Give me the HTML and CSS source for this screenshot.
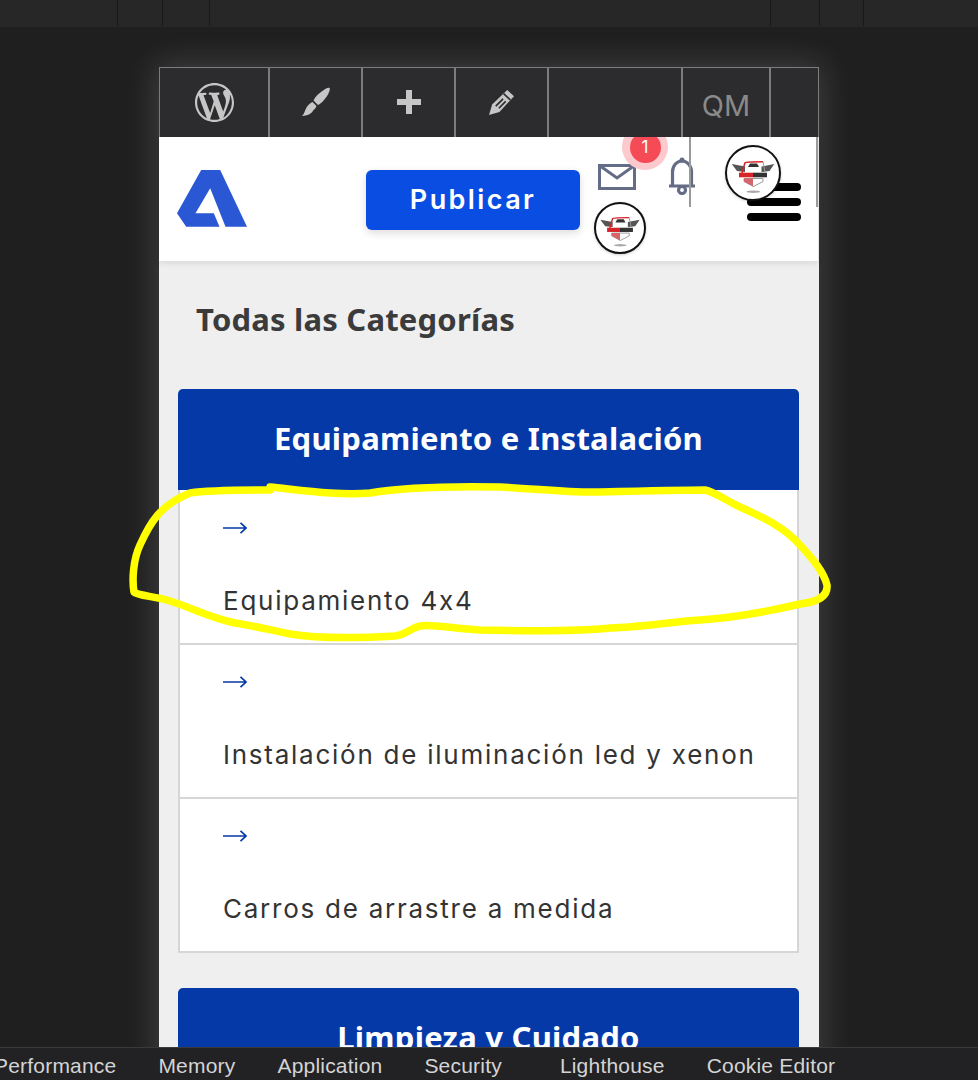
FILE: index.html
```html
<!DOCTYPE html>
<html lang="es">
<head>
<meta charset="utf-8">
<title>Todas las Categorías</title>
<link rel="stylesheet" href="styles.css">
</head>
<body>
<div class="topstrip">
  <i class="tick t1"></i><i class="tick t2"></i><i class="tick t3"></i><i class="tick t4"></i><i class="tick t5"></i><i class="tick t6"></i>
</div>
<main class="stage">
  <div class="phone">
    <nav class="adminbar">
      <div class="cell c1"><svg class="wp" viewBox="0 0 20 20"><path d="M20 10C20 4.49 15.51 0 10 0S0 4.49 0 10s4.49 10 10 10 10-4.49 10-10zM7.78 15.37L4.37 6.22c.55-.02 1.17-.08 1.17-.08.5-.06.44-1.13-.06-1.11 0 0-1.45.11-2.37.11-.18 0-.37 0-.58-.01C4.12 2.69 6.87 1.11 10 1.11c2.33 0 4.45.87 6.05 2.34-.68-.11-1.65.39-1.65 1.58 0 .74.45 1.36.9 2.1.35.61.55 1.36.55 2.46 0 1.49-1.4 5-1.4 5l-3.03-8.37c.54-.02.82-.17.82-.17.5-.05.44-1.25-.06-1.22 0 0-1.44.12-2.38.12-.87 0-2.33-.12-2.33-.12-.5-.03-.56 1.2-.06 1.22l.92.08 1.26 3.41zM17.41 10c.24-.64.74-1.87.43-4.25.7 1.29 1.05 2.71 1.05 4.25 0 3.29-1.73 6.24-4.4 7.78.97-2.59 1.94-5.2 2.92-7.78zM6.1 18.09C3.12 16.65 1.11 13.53 1.11 10c0-1.3.23-2.48.72-3.59C3.25 10.3 4.67 14.2 6.1 18.09zm4.03-6.63l2.58 6.98c-.86.29-1.76.45-2.71.45-.79 0-1.57-.11-2.29-.33.81-2.38 1.62-4.74 2.42-7.1z"/></svg></div>
      <div class="cell c2"><svg class="brush" viewBox="0 0 30 30"><path d="M28.500 .8C30 2 27 9 23 13C21 15.500 19 17 17 18L12.500 13.500C14 10 17 7 20 5C23 2.500 27 0 28.500 .8z"/><path d="M11.500 15L15.500 19C15 20.500 14 22 12.500 23C11 26 8 28.500 1 29C3.500 27 3.500 24 5.500 20.500C7 18 9 16 11.500 15z"/></svg></div>
      <div class="cell c3"><svg class="plus" viewBox="0 0 24 24"><path d="M9 0h6v9h9v6h-9v9H9v-9H0V9h9z"/></svg></div>
      <div class="cell c4"><svg class="pencil" viewBox="0 0 24 24"><path d="M0 24L3 14 17.500 0 24 6 10 21z"/><path class="cut" d="M6.500 15.500L13.500 8.500M9.500 17.500L16 11M14 3.500L20.500 9.500"/></svg></div>
      <div class="cell c5"></div>
      <div class="cell c6">QM</div>
      <div class="cell c7"></div>
    </nav>
    <header class="sitehead">
      <svg class="logo" viewBox="0 0 70 58"><path d="M24.200 0H43.200L70 56.700H48.500L33.200 18.300 18.500 43.300H36.800L42.500 56.700H9.200L0 43.300z"/></svg>
      <a class="publish">Publicar</a>
      <svg class="mail" viewBox="0 0 38 26"><path d="M1.500 1.500h35v23h-35zM1.500 1.500L19 14 36.500 1.500"/></svg>
      <svg class="bell" viewBox="0 0 28 38"><circle class="solid" cx="14" cy="3" r="2.500"/><path d="M1 29h26M4.500 29V15c0-6 4-11 9.500-11s9.500 5 9.500 11v14"/><circle cx="14" cy="33" r="3.500"/></svg>
      <span class="badge"><span class="badge-dot">1</span></span>
      <i class="guide g1"></i><i class="guide g2"></i>
      <span class="burger"><i></i><i></i><i></i></span>
      <span class="avatar a1"><svg viewBox="0 0 52 52"><use href="#crest"/></svg></span>
      <span class="avatar a2"><svg viewBox="0 0 52 52"><use href="#crest"/></svg></span>
    </header>
    <section class="content">
      <h1 class="page-title">Todas las Categorías</h1>
      <article class="card">
        <h2 class="card-head">Equipamiento e Instalación</h2>
        <ul class="items">
          <li class="item"><svg class="arrow" viewBox="0 0 24 12"><path d="M0 6h23M17.500 .8L23 6l-5.500 5.200"/></svg><span>Equipamiento 4x4</span></li>
          <li class="item"><svg class="arrow" viewBox="0 0 24 12"><path d="M0 6h23M17.500 .8L23 6l-5.500 5.200"/></svg><span>Instalación de iluminación led y xenon</span></li>
          <li class="item"><svg class="arrow" viewBox="0 0 24 12"><path d="M0 6h23M17.500 .8L23 6l-5.500 5.200"/></svg><span>Carros de arrastre a medida</span></li>
        </ul>
      </article>
      <article class="card">
        <h2 class="card-head">Limpieza y Cuidado</h2>
      </article>
    </section>
  </div>
</main>
<footer class="devtabs">
  <span class="tab first">Performance</span>
  <span class="tab">Memory</span>
  <span class="tab">Application</span>
  <span class="tab">Security</span>
  <span class="tab wide">Lighthouse</span>
  <span class="tab">Cookie Editor</span>
</footer>
<svg class="scribble" viewBox="0 0 978 1080"><path d="M270 487C300 490 340 496 370 493C400 488 450 486 500 487C540 489 570 493 600 492C640 491 680 490 705 490C715 492 725 500 740 507C765 518 785 528 800 545C812 558 824 572 827 585C828 596 818 602 800 604C770 611 730 618 700 620C670 622 640 627 610 628C570 632 520 631 480 630C450 628 430 624 420 626C410 628 408 634 395 636C360 638 320 639 290 634C270 630 250 625 235 623C210 618 190 607 170 601C155 596 138 596 134 592C132 580 133 560 140 545C150 523 160 505 190 493C210 490 240 490 270 490" /></svg>
<svg class="defs" width="0" height="0"><defs>
  <g id="crest">
    <path fill="#555" d="M4.700 17L18 19.500 18 25 10 24zM47.300 17L34.500 19.500 34.500 25 42.500 24z"/>
    <path fill="none" stroke="#d8232a" stroke-width="1.500" d="M15 26L18 15.700Q19 14.700 36 14.700"/>
    <path fill="none" stroke="#999" stroke-width="1" d="M36 14.700L38 25"/>
    <path fill="#333" d="M23 16.500h7l2 3.500H21z"/>
    <path fill="#d8232a" d="M12 25.700h14v4.600H12z"/>
    <path fill="#333" d="M26 25.700h14v4.600H26z"/>
    <path fill="#fff" stroke="#999" stroke-width="1" d="M17 31.500h19v3l-9.500 5-9.500-5z"/>
    <path fill="#d8636a" d="M17 31.500h9v8l-9-5z"/>
    <ellipse cx="26.300" cy="44.700" rx="7" ry="1.300" fill="#aaa"/>
  </g>
</defs></svg>
</body>
</html>
```
FILE: styles.css
```css
* { box-sizing: border-box; }
html, body { margin: 0; height: 100%; }
body {
  width: 978px;
  height: 1080px;
  overflow: hidden;
  display: flex;
  flex-direction: column;
  position: relative;
  background: #1f1f1f;
  font-family: "Inter", "Liberation Sans", sans-serif;
}

/* top strip */
.topstrip { height: 27px; flex: none; background: #272727; display: flex; }
.tick { display: block; width: 1px; height: 26px; background: #191919; }
.t1 { margin-left: 117px; }
.t2 { margin-left: 44px; }
.t3 { margin-left: 46px; }
.t4 { margin-left: 560px; }
.t5 { margin-left: 48px; }
.t6 { margin-left: 43px; }

/* stage */
.stage { flex: 1; min-height: 0; overflow: hidden; padding: 40px 0 0 159px; }
.phone {
  width: 660px;
  height: 1100px;
  box-shadow: 0 0 30px 4px rgba(255, 255, 255, .15);
  background: #efefef;
}

/* admin bar */
.adminbar {
  height: 70px;
  display: flex;
  background: #2c2c2e;
  border: 1px solid #7c7c7c;
  border-bottom: 0;
  color: #c4c4c4;
  position: relative;
  z-index: 2;
}
.cell { display: flex; align-items: center; justify-content: center; border-right: 2px solid #7c7c7c; flex: none; fill: #c6c6c6; }
.c1 { width: 110px; }
.c2 { width: 93px; }
.c3 { width: 93px; }
.c4 { width: 93px; }
.c5 { width: 134px; }
.c6 { width: 88px; padding-top: 5px; font: 400 29px "Inter", sans-serif; color: #8a8a8a; }
.c7 { flex: 1; border-right: 0; }
.wp { width: 39px; height: 39px; margin-top: -1px; }
.brush { width: 30px; height: 30px; margin-top: -1px; }
.plus { width: 24px; height: 24px; margin-top: -1px; }
.pencil { width: 25px; height: 25px; margin-top: -1px; }
.cut { fill: none; stroke: #2c2c2e; stroke-width: 1.600; }

/* site header */
.sitehead {
  height: 124px;
  background: #fff;
  display: flex;
  align-items: flex-start;
  position: relative;
  box-shadow: 0 2px 6px rgba(0, 0, 0, .1);
  margin-right: 1px;
}
.logo { width: 70px; height: 58px; margin: 33px 0 0 18px; fill: #2a57d3; flex: none; }
.publish {
  width: 214px;
  height: 60px;
  margin: 33px 0 0 119px;
  padding-bottom: 2px;
  border-radius: 6px;
  background: #0a4de3;
  color: #fff;
  font: 600 27px "Inter", sans-serif;
  letter-spacing: 2.400px;
  display: flex;
  align-items: center;
  justify-content: center;
  box-shadow: 0 3px 8px rgba(0, 0, 0, .14);
  flex: none;
}
.mail { width: 38px; height: 26px; margin: 27px 0 0 18px; flex: none; fill: none; stroke: #656c85; stroke-width: 3; }
.bell { width: 28px; height: 38px; margin: 20px 0 0 32px; flex: none; fill: none; stroke: #656c85; stroke-width: 3.200; }
.bell .solid { fill: #656c85; stroke: none; }
.badge {
  position: absolute;
  left: 463px;
  top: -13px;
  width: 46px;
  height: 46px;
  border-radius: 50%;
  background: #fcc9cd;
  display: flex;
  align-items: center;
  justify-content: center;
}
.badge-dot {
  width: 31px;
  height: 31px;
  border-radius: 50%;
  background: #f54b57;
  color: #fff;
  font: 400 17px "Inter", sans-serif;
  display: flex;
  align-items: center;
  justify-content: center;
}
.guide { position: absolute; top: 0; width: 2px; height: 70px; background: #9a9a9a; }
.g1 { left: 530px; }
.g2 { left: 657px; }
.burger { position: absolute; left: 588px; top: 46px; width: 54px; display: flex; flex-direction: column; gap: 7px; }
.burger i { display: block; height: 8px; border-radius: 4px; background: #000; }
.avatar { position: absolute; border-radius: 50%; background: #fff; border: 2px solid #111; display: block; box-shadow: 0 1px 3px rgba(0, 0, 0, .2); }
.avatar svg { display: block; width: 100%; height: 100%; }
.a1 { left: 566px; top: 8px; width: 56px; height: 56px; }
.a2 { left: 435px; top: 65px; width: 52px; height: 52px; }

/* content */
.content { padding: 0 19px 0 19px; background: #efefef; height: 786px; overflow: hidden; }
.page-title {
  margin: 0;
  padding: 37px 0 0 18px;
  height: 128px;
  font: 700 31px/43px "Noto Sans", "Open Sans", sans-serif;
  letter-spacing: .2px;
  color: #3b3b3b;
}
.card { margin: 0 1px 35px 0; }
.card-head {
  margin: 0;
  height: 101px;
  background: #0639a8;
  border-radius: 5px 5px 0 0;
  color: #fff;
  font: 700 31px/98px "Noto Sans", "Open Sans", sans-serif;
  letter-spacing: .25px;
  text-align: center;
}
.items { list-style: none; margin: 0; padding: 1px 0 0; background: #fff; border: 2px solid #d6d6d6; border-top: 0; }
.item {
  height: 154px;
  border-bottom: 2px solid #d6d6d6;
  padding: 31px 0 0 43px;
  display: flex;
  flex-direction: column;
  align-items: flex-start;
  color: #333;
  font-size: 26px;
  line-height: 34px;
  letter-spacing: 1.750px;
}
.item:last-child { border-bottom: 0; height: 152px; }
.arrow { width: 24px; height: 12px; fill: none; stroke: #0639a8; stroke-width: 1.700; margin-bottom: 50px; flex: none; }

/* devtools tabs */
.devtabs {
  height: 33px;
  flex: none;
  background: #222224;
  border-top: 1px solid #3a3a3a;
  display: flex;
  align-items: center;
  gap: 42px;
  padding-top: 4px;
  color: #d4d4d4;
  font: 400 21px "Liberation Sans", Arial, sans-serif;
  letter-spacing: .2px;
  position: relative;
  z-index: 3;
}
.first { margin-left: -6px; }
.wide { margin-left: 16px; }

/* annotation */
.scribble { position: absolute; left: 0; top: 0; width: 978px; height: 1080px; fill: none; stroke: #ffff00; stroke-width: 7.500; stroke-linecap: round; stroke-linejoin: round; z-index: 2; pointer-events: none; }
.defs { position: absolute; }
```
